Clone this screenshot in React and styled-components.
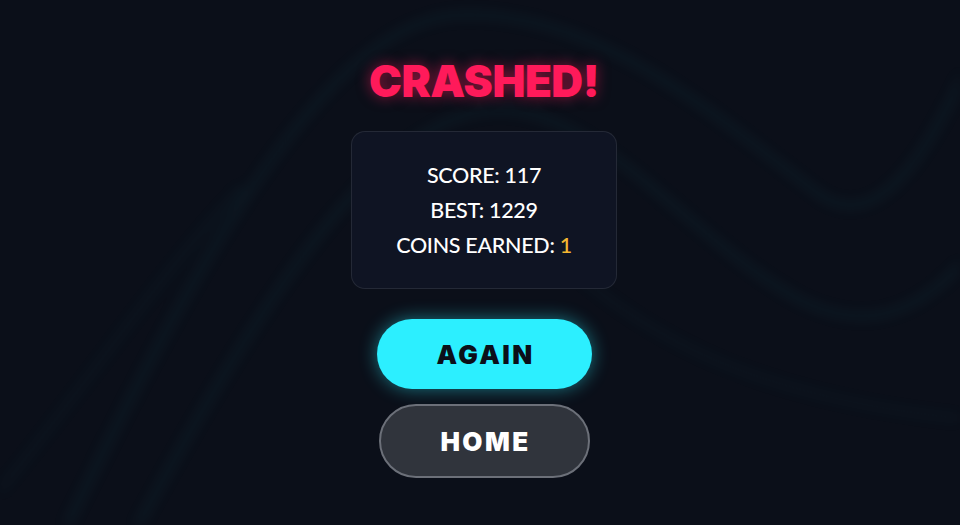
import React from 'react';
import styled, { createGlobalStyle } from 'styled-components';

const GlobalStyle = createGlobalStyle`
  html, body {
    margin: 0;
    padding: 0;
    background: #0b0f19;
  }
  * { box-sizing: border-box; }
`;

const Screen = styled.div`
  position: relative;
  overflow: hidden;
  min-height: 100vh;
  padding: 10px 0 0 8px;
  display: flex;
  flex-direction: column;
  align-items: center;
  justify-content: center;
  background: #0b0f19;
  font-family: Lato, "Open Sans", sans-serif;
`;

const Waves = styled.svg`
  position: absolute;
  inset: 0;
  width: 100%;
  height: 100%;
  filter: blur(6px);
  pointer-events: none;
`;

const Content = styled.div`
  position: relative;
  display: flex;
  flex-direction: column;
  align-items: center;
`;

const Title = styled.h1`
  margin: 0 0 26px;
  font-family: Inter, "Liberation Sans", sans-serif;
  font-weight: 900;
  font-size: 44px;
  line-height: 1.1;
  letter-spacing: -0.5px;
  color: #ff1a5a;
  text-shadow: 0 0 14px rgba(255, 26, 90, 0.55);
`;

const StatsCard = styled.div`
  width: 266px;
  height: 158px;
  margin-bottom: 30px;
  display: flex;
  flex-direction: column;
  align-items: center;
  justify-content: center;
  border-radius: 14px;
  border: 1px solid rgba(255, 255, 255, 0.09);
  background: #0f1423;
`;

const StatLine = styled.div`
  color: #ffffff;
  font-size: 21.5px;
  font-weight: 500;
  line-height: 35px;
  letter-spacing: -0.3px;
`;

const Coins = styled.span`
  color: #f4b731;
`;

const Actions = styled.div`
  display: flex;
  flex-direction: column;
  align-items: center;
  gap: 15px;
`;

const PillButton = styled.button`
  display: flex;
  align-items: center;
  justify-content: center;
  border-radius: 999px;
  cursor: pointer;
  font-family: Inter, "Liberation Sans", sans-serif;
  font-weight: 900;
  font-size: 26px;
  letter-spacing: 2.4px;
  padding: 0 0 0 3px;
  width: ${p => (p.$primary ? '215px' : '211px')};
  height: ${p => (p.$primary ? '70px' : '74px')};
  color: ${p => (p.$primary ? '#0b0f19' : '#ffffff')};
  background: ${p => (p.$primary ? '#2cefff' : '#30343c')};
  border: ${p => (p.$primary ? 'none' : '2px solid #6c7079')};
  box-shadow: ${p => (p.$primary ? '0 0 18px rgba(44, 239, 255, 0.45)' : 'none')};
`;

export default function App() {
  return (
    <>
      <GlobalStyle />
      <Screen>
        <Waves viewBox="0 0 960 525" preserveAspectRatio="none">
          <g fill="none" stroke="rgba(45, 200, 205, 0.038)" strokeWidth="12" strokeLinecap="round">
            <path d="M 60 540 C 200 250, 330 20, 460 15 C 600 10, 720 120, 820 195 C 880 235, 930 150, 975 50" />
            <path d="M 130 540 C 260 300, 380 110, 500 110 C 600 110, 690 240, 800 300 C 880 340, 930 300, 975 250" />
            <path d="M 0 490 C 90 380, 170 260, 240 190" opacity="0.6" />
            <path d="M 560 260 C 650 340, 760 400, 975 420" opacity="0.6" />
          </g>
        </Waves>
        <Content>
          <Title>CRASHED!</Title>
          <StatsCard>
            <StatLine>SCORE: 117</StatLine>
            <StatLine>BEST: 1229</StatLine>
            <StatLine>COINS EARNED: <Coins>1</Coins></StatLine>
          </StatsCard>
          <Actions>
            <PillButton $primary>AGAIN</PillButton>
            <PillButton>HOME</PillButton>
          </Actions>
        </Content>
      </Screen>
    </>
  );
}
